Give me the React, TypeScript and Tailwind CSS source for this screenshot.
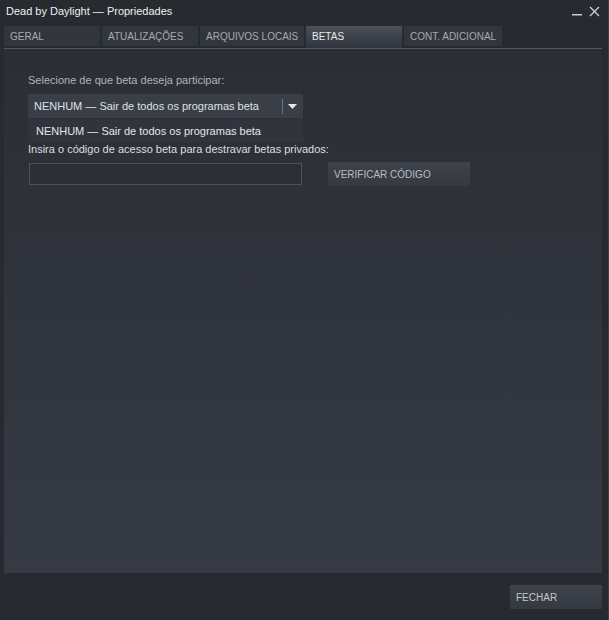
import React from "react";

export default function App() {
  const tabs = [
    { label: "GERAL", w: 96 },
    { label: "ATUALIZAÇÕES", w: 96 },
    { label: "ARQUIVOS LOCAIS", w: 104 },
    { label: "BETAS", w: 96, active: true },
    { label: "CONT. ADICIONAL", w: 98 },
  ];
  return (
    <div
      className="w-[609px] h-[620px] bg-[#272a2f] flex flex-col border-r border-[#3b3f46] overflow-hidden"
      style={{ fontFamily: '"Liberation Sans", Arial, sans-serif' }}
    >
      {/* title bar */}
      <div className="h-[22px] flex items-center justify-between pl-[6px] pr-[8px]">
        <span className="text-[11px] leading-[14px] text-[#eef0f2]">Dead by Daylight — Propriedades</span>
        <div className="flex items-center gap-[7px] text-[#c9ccd0]">
          <svg width="10" height="10" viewBox="0 0 10 10">
            <rect x="0" y="8" width="10" height="1.5" fill="#c9ccd0" />
          </svg>
          <svg width="11" height="11" viewBox="0 0 11 11">
            <path d="M1 1 L10 10 M10 1 L1 10" stroke="#c9ccd0" strokeWidth="1.4" />
          </svg>
        </div>
      </div>
      {/* tabs */}
      <div className="mt-[4px] pl-[4px] flex items-start gap-[2px] h-[22px]">
        {tabs.map((t, i) =>
          t.active ? (
            <div
              key={i}
              style={{ width: t.w }}
              className="h-[22px] pl-[6px] pt-[5px] whitespace-nowrap text-[10px] leading-[12px] text-[#e8eaec] bg-gradient-to-b from-[#4b5059] to-[#30343c]"
            >
              {t.label}
            </div>
          ) : (
            <div
              key={i}
              style={{ width: t.w }}
              className="h-[20px] pl-[6px] pt-[5px] whitespace-nowrap text-[10px] leading-[12px] text-[#a7abb1] bg-[#31353c]"
            >
              {t.label}
            </div>
          )
        )}
      </div>
      {/* panel */}
      <div className="ml-[4px] mr-[6px] h-[525px] border-t border-[#555a62] bg-gradient-to-b from-[#2b2e34] to-[#353a45] pl-[24px] pt-[24px]">
        <div className="text-[11px] leading-[14px] text-[#b0b4ba]">Selecione de que beta deseja participar:</div>
        <div className="mt-[7px] w-[275px]">
          <div className="h-[24px] bg-[#3a3e47] flex items-center pl-[6px] pr-[6px] justify-between">
            <span className="text-[11px] leading-[14px] text-[#dfe1e3]">NENHUM — Sair de todos os programas beta</span>
            <div className="flex items-center h-full">
              <div className="w-px h-[15px] bg-[#6e737b] mr-[5px]" />
              <svg width="9" height="5" viewBox="0 0 9 5">
                <path d="M0 0 L9 0 L4.5 5 Z" fill="#e6e8ea" />
              </svg>
            </div>
          </div>
          <div className="h-[23px] mt-px bg-[#30343d] flex items-center pl-[8px]">
            <span className="text-[11px] leading-[14px] text-[#e4e6e8]">NENHUM — Sair de todos os programas beta</span>
          </div>
        </div>
        <div className="text-[11px] leading-[14px] text-[#dcdee0]">
          Insira o código de acesso beta para destravar betas privados:
        </div>
        <div className="mt-[6px] flex items-center">
          <div className="ml-[1px] w-[273px] h-[22px] border border-[#4d525b] bg-[#2c3036]" />
          <div className="ml-[26px] w-[142px] h-[24px] bg-gradient-to-b from-[#3e424b] to-[#353942] flex items-center pl-[6px] text-[10px] text-[#b9bdc2]">
            VERIFICAR CÓDIGO
          </div>
        </div>
      </div>
      {/* footer */}
      <div className="flex-1 flex justify-end items-start pt-[12px] pr-[6px]">
        <div className="w-[92px] h-[24px] bg-gradient-to-b from-[#3e424b] to-[#353942] flex items-center pl-[6px] text-[10px] text-[#c3c7cc]">
          FECHAR
        </div>
      </div>
    </div>
  );
}
